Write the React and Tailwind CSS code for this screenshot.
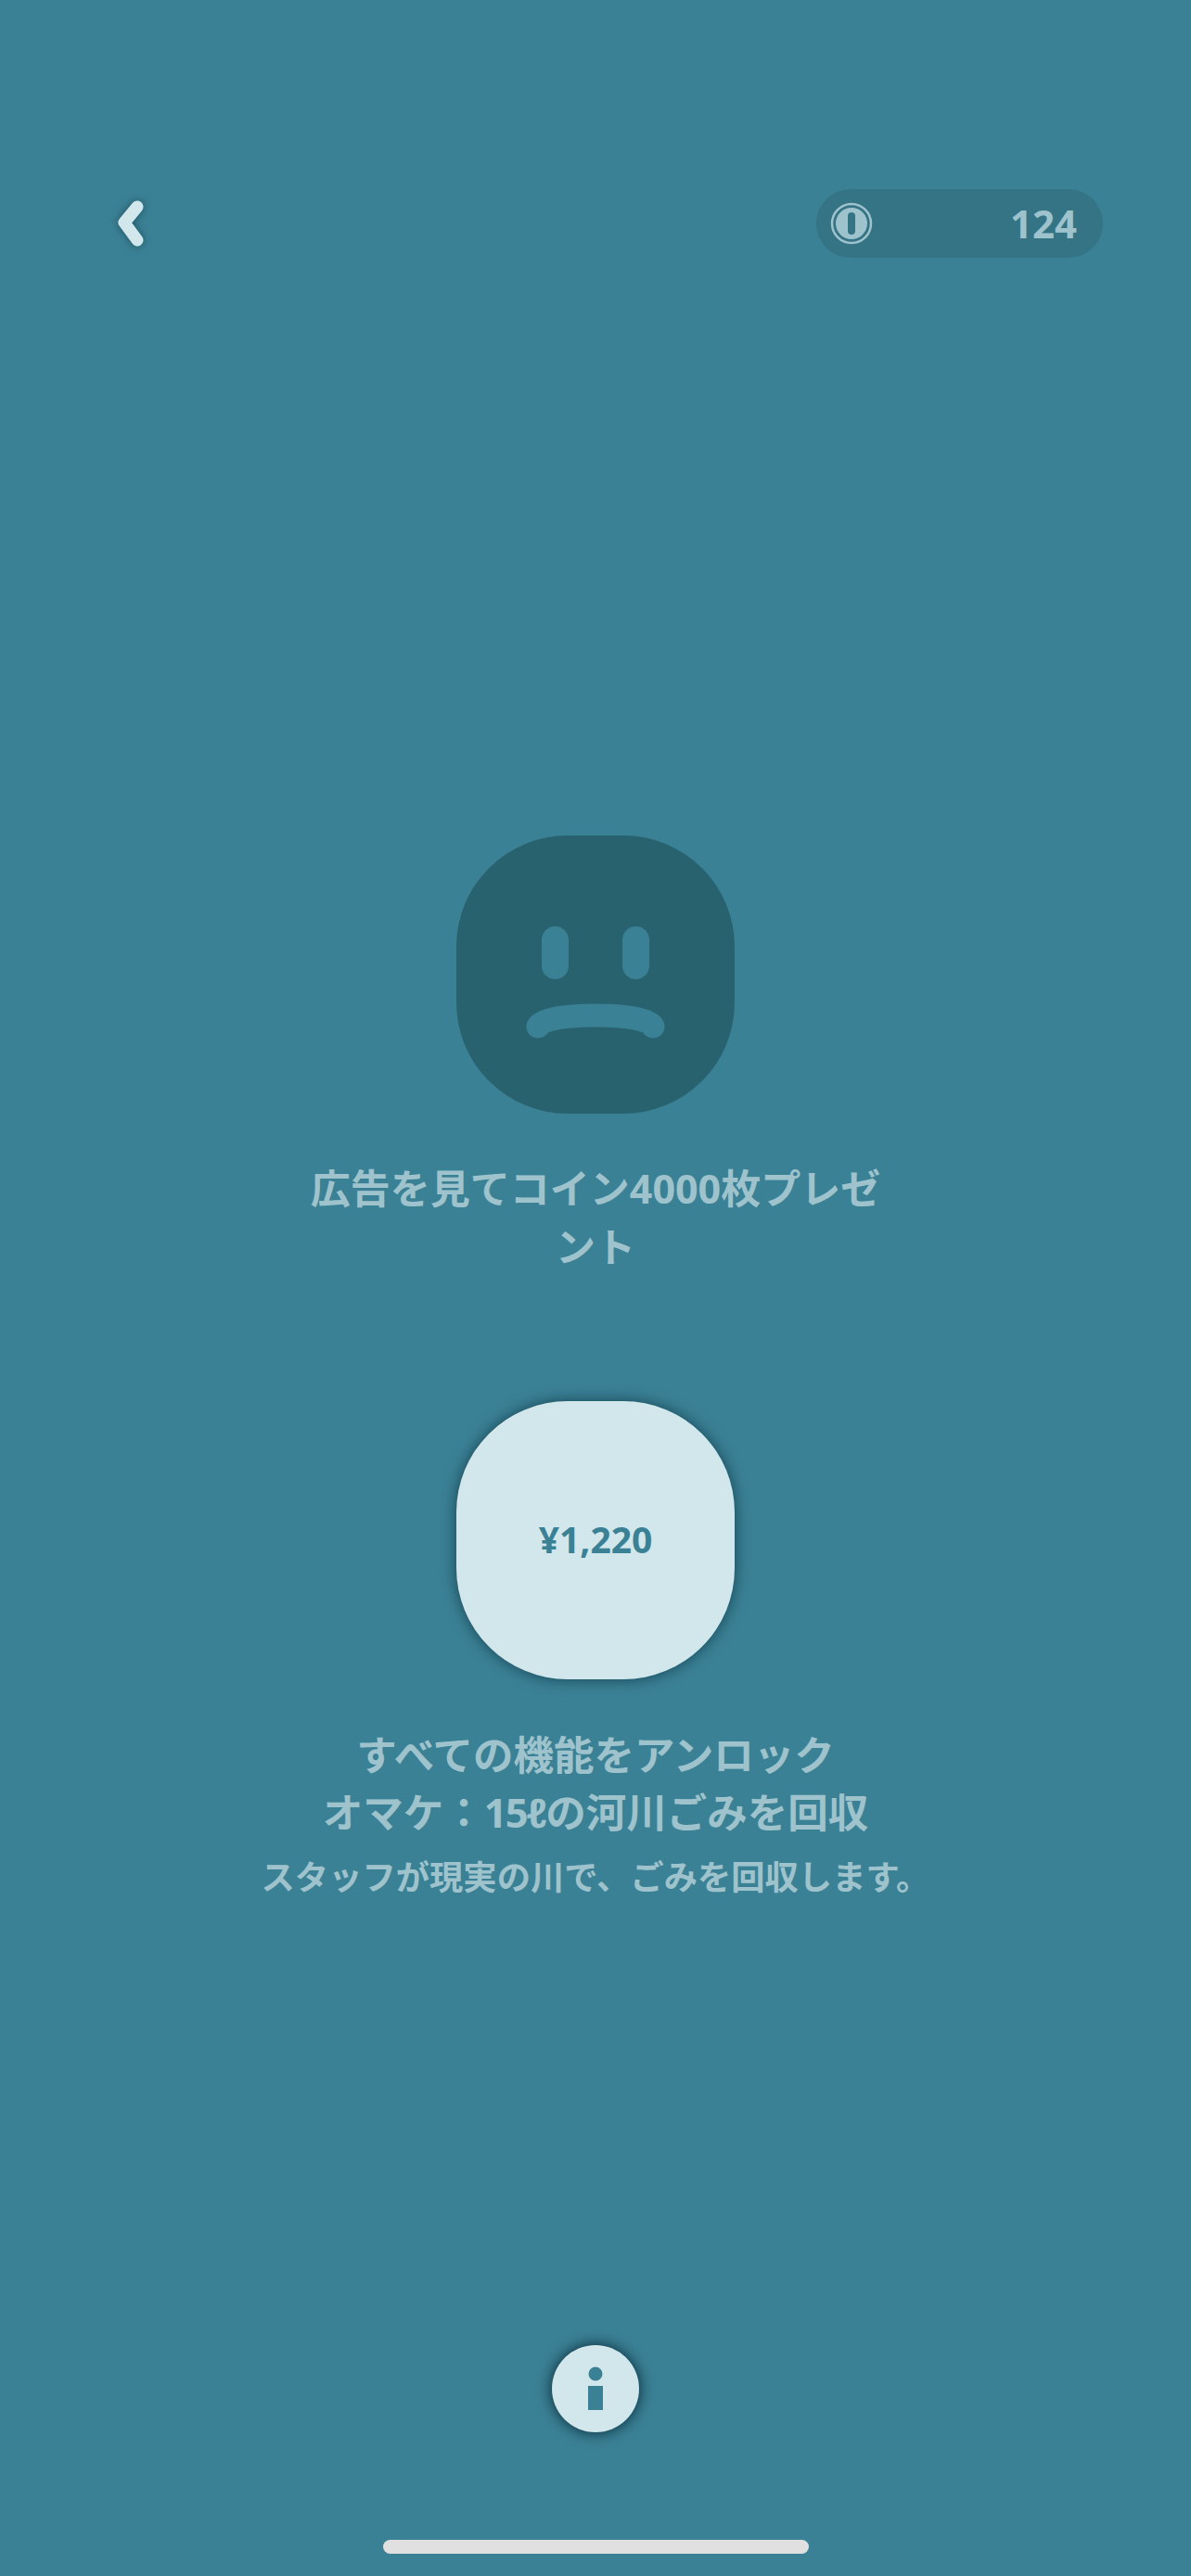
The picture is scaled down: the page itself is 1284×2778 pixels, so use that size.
const font = { fontFamily: '"Open Sans", "Noto Sans CJK JP", sans-serif' };

function BackIcon() {
  return (
    <svg width="40" height="64" viewBox="0 0 40 64" className="drop-shadow-[0_0_5px_rgba(20,60,75,0.7)]">
      <path d="M28 14 L14 31 L28 50" fill="none" stroke="#d2e7eb" strokeWidth="13" strokeLinecap="round" strokeLinejoin="round" />
    </svg>
  );
}

function CoinIcon() {
  return (
    <svg width="46" height="46" viewBox="0 0 46 46">
      <circle cx="23" cy="23" r="21" fill="none" stroke="#9fc3cd" strokeWidth="2.5" />
      <circle cx="23" cy="23" r="17" fill="#9fc3cd" />
      <rect x="19" y="11" width="8" height="24" rx="4" fill="#347485" />
    </svg>
  );
}

function SadFace() {
  return (
    <svg width="300" height="300" viewBox="0 0 300 300">
      <rect x="92" y="98" width="29" height="57" rx="14.5" fill="#3b8195" />
      <rect x="179" y="98" width="29" height="57" rx="14.5" fill="#3b8195" />
      <path d="M88 206 C94 190 206 190 212 206" fill="none" stroke="#3b8195" strokeWidth="25" strokeLinecap="round" />
    </svg>
  );
}

function InfoIcon() {
  return (
    <svg width="94" height="94" viewBox="0 0 94 94">
      <circle cx="47" cy="31" r="7.5" fill="#3b8195" />
      <rect x="39" y="44" width="16" height="26" fill="#3b8195" />
    </svg>
  );
}

export default function App() {
  return (
    <div className="relative flex h-[2778px] w-[1284px] flex-col items-center overflow-hidden bg-[#3b8195] pt-[204px] font-bold text-[#9fc3cd]" style={font}>
      {/* top bar */}
      <div className="flex w-full items-center justify-between pl-[120px] pr-[95px]">
        <BackIcon />
        <div className="flex h-[74px] w-[309px] items-center justify-between rounded-full bg-[#347485] pl-[15px] pr-[28px]">
          <CoinIcon />
          <span className="text-[42px] leading-none">124</span>
        </div>
      </div>

      {/* ad offer */}
      <div className="mt-[623px] h-[300px] w-[300px] rounded-[120px] bg-[#29626f]">
        <SadFace />
      </div>
      <p className="mt-[49px] w-[640px] text-center text-[43px] leading-[63px]">広告を見てコイン4000枚プレゼント</p>

      {/* purchase */}
      <button className="mt-[135px] flex h-[300px] w-[300px] items-center justify-center rounded-[120px] bg-[#d2e7eb] pb-[2px] text-[39px] text-[#3b8195] shadow-[0_0_16px_rgba(5,40,55,0.7)]">
        ¥1,220
      </button>
      <p className="mt-[51px] text-center text-[43.5px] leading-[62px]">
        すべての機能をアンロック
        <br />
        オマケ：<span className="tracking-[-2px]">15ℓ</span>の河川ごみを回収
      </p>
      <p className="mt-[13px] text-center text-[36.3px] leading-[50px]">スタッフが現実の川で、ごみを回収します。</p>

      {/* info button + home indicator */}
      <button className="absolute left-[595px] top-[2529px] h-[94px] w-[94px] rounded-full bg-[#d2e7eb] shadow-[0_0_16px_rgba(0,30,45,0.95)]">
        <InfoIcon />
      </button>
      <div className="absolute left-[413px] top-[2739px] h-[15px] w-[459px] rounded-full bg-[#e0e0e0]" />
    </div>
  );
}
